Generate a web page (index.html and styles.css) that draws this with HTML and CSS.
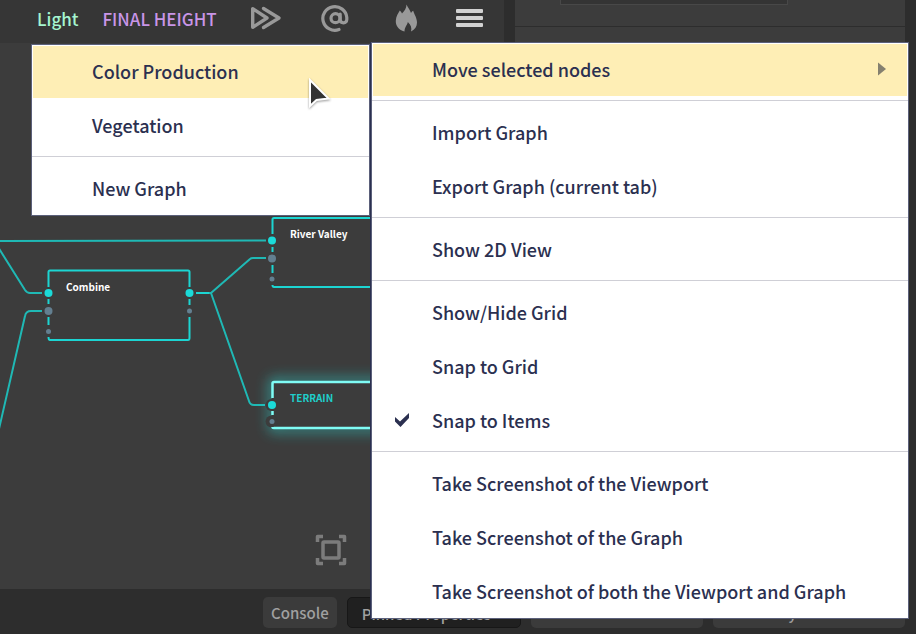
FILE: index.html
```html
<!DOCTYPE html>
<html lang="en">
<head>
<meta charset="utf-8">
<title>Graph editor</title>
<link rel="stylesheet" href="styles.css">
</head>
<body>
<div class="app">
  <div class="workspace">
    <main class="editor">
      <header class="toolbar">
        <nav class="tabs">
          <a class="tab tab-light" href="#light">Light</a>
          <a class="tab tab-height" href="#height">FINAL HEIGHT</a>
        </nav>
        <div class="tools">
          <button class="tool" type="button" aria-label="Build">
            <svg width="32" height="28" viewBox="0 0 32 28" fill="none" stroke="#999" stroke-width="3.4" stroke-linejoin="round" stroke-linecap="round"><path d="M2.7 4.700V23.300L17 14Z"/><path d="M13.500 4.500L29 14L13.500 23.500"/></svg>
          </button>
          <button class="tool" type="button" aria-label="Variables">
            <svg width="32" height="28" viewBox="-1 0 32 28" fill="none" stroke="#999" stroke-width="3.200" stroke-linecap="round"><path d="M20 25.500A12 11.800 0 1 1 27.800 13.500V15.500Q27.600 18.800 24.500 18.800Q21.200 18.800 21.200 15.500V10.200"/><circle cx="16.500" cy="14.200" r="4.500"/></svg>
          </button>
          <button class="tool" type="button" aria-label="Bake">
            <svg width="32" height="28" viewBox="-4 0 32 28" fill="#999"><path d="M16.500.500C17.500 3 20 6 21 9Q22 7 23.200 6.800C24 10 27 14 27 18.500C27 22.500 25 25.500 21 27.500C22 24 21 21 17.800 18C17.600 20.500 14.500 23 14.500 27.500C8 25.800 5.500 21 5.800 16.500C6 12 8.500 9 9.800 6.500Q11.500 8 12 9.500C14.500 7 16.500 4 16.500.500Z"/></svg>
          </button>
          <button class="tool" type="button" aria-label="Graph menu" aria-expanded="true">
            <svg width="32" height="28" viewBox="0 0 32 28" fill="#d2d2d2"><rect x="2" y="5" width="27" height="4" rx="1"/><rect x="2" y="12" width="27" height="4" rx="1"/><rect x="2" y="19" width="27" height="4" rx="1"/></svg>
          </button>
        </div>
      </header>
      <section class="canvas">
        <svg class="graph" width="504" height="547" viewBox="0 43 504 547" fill="none">
          <defs>
            <filter id="glow" x="-20%" y="-60%" width="140%" height="220%"><feGaussianBlur stdDeviation="7"/></filter>
          </defs>
          <g stroke="#1fb9b5" stroke-width="2" stroke-linejoin="round">
            <path d="M0 241L266 240.500"/>
            <path d="M-2 247L25 290Q27 293 30 293H42"/>
            <path d="M-1 429L25 316Q26 311 31 311H42"/>
            <path d="M196 293H211L250 259Q251 258 253 258H266"/>
            <path d="M211 293L249 401Q250 405 254 405H265"/>
          </g>
          <g stroke="#1cd5d2" stroke-width="2">
            <path d="M48.500 287V272Q48.500 270.500 50 270.500H188Q189.500 270.500 189.500 272V287M48.500 299V304M48.500 317V325M48.500 337Q48.500 340 50 340H188Q189.500 340 189.500 338V317M189.500 299V305M196 293H209"/>
            <path d="M430 218H274Q272.500 218 272.500 219.500V234M272.500 247V252M272.500 265V273M272.500 285Q272.500 287 274 287H430"/>
          </g>
          <path d="M430 382H273V428H430" stroke="#2be0da" stroke-width="6" opacity=".75" filter="url(#glow)"/>
          <path d="M272 383H430V427H272Z" fill="#3c3c3c"/>
          <g fill="#3c3c3c"><circle cx="271.500" cy="405" r="6"/><circle cx="271.500" cy="421.500" r="6"/></g>
          <path d="M430 382H274Q272.500 382 272.500 383.500V398M272.500 411V415M272.500 427Q272.500 428 274 428H430" stroke="#7ffcf5" stroke-width="2.500"/>
          <g fill="#1bdad8"><circle cx="48.500" cy="293" r="4"/><circle cx="189.500" cy="293" r="4"/><circle cx="272" cy="240.500" r="4"/><circle cx="272" cy="405" r="4"/></g>
          <g fill="#637f90"><circle cx="48.500" cy="311" r="4"/><circle cx="272" cy="258.500" r="4"/><circle cx="48.500" cy="331.500" r="2.500"/><circle cx="189.500" cy="311" r="2.500"/><circle cx="272" cy="279" r="2.500"/><circle cx="272" cy="421.500" r="2.500"/></g>
          <g class="node-name">
            <text x="66" y="291">Combine</text>
            <text x="290" y="238">River Valley</text>
            <text class="active" x="290" y="402">TERRAIN</text>
          </g>
        </svg>
        <button class="fit" type="button" aria-label="Fit to view">
          <svg width="32" height="32" viewBox="0 0 32 32" fill="none" stroke="#7c7c7c"><rect x="8" y="8" width="16" height="16" rx="1" stroke-width="3.500"/><path d="M2.500 8V2.500H8M24 2.500H29.500V8M29.500 24V29.500H24M8 29.500H2.500V24" stroke-width="3.500" stroke-linejoin="round"/></svg>
        </button>
      </section>
    </main>
    <aside class="properties">
      <div class="preview"></div>
    </aside>
  </div>
  <footer class="dock">
    <button class="dock-tab" type="button">Console</button>
    <button class="dock-tab selected" type="button">Pinned Properties</button>
    <button class="dock-tab" type="button">Node Statistics</button>
    <button class="dock-tab" type="button">Memory Allocations</button>
  </footer>

  <div class="menu submenu" role="menu">
    <button class="item hover" type="button" role="menuitem">Color Production</button>
    <button class="item" type="button" role="menuitem">Vegetation</button>
    <hr class="rule">
    <button class="item" type="button" role="menuitem">New Graph</button>
  </div>
  <div class="menu main-menu" role="menu">
    <button class="item hover" type="button" role="menuitem">Move selected nodes<svg class="arrow" width="8" height="14" viewBox="0 0 8 14"><path d="M0 .500L8 7L0 13.500Z" fill="#85806f"/></svg></button>
    <hr class="rule">
    <button class="item" type="button" role="menuitem">Import Graph</button>
    <button class="item" type="button" role="menuitem">Export Graph (current tab)</button>
    <hr class="rule">
    <button class="item" type="button" role="menuitem">Show 2D View</button>
    <hr class="rule">
    <button class="item" type="button" role="menuitem">Show/Hide Grid</button>
    <button class="item" type="button" role="menuitem">Snap to Grid</button>
    <button class="item checked" type="button" role="menuitem"><svg class="check" width="16" height="16" viewBox="0 0 16 16"><path d="M1 5L6 9.500L15 1V6L6.500 15L1 9.500Z" fill="#2b3050"/></svg>Snap to Items</button>
    <hr class="rule">
    <button class="item" type="button" role="menuitem">Take Screenshot of the Viewport</button>
    <button class="item" type="button" role="menuitem">Take Screenshot of the Graph</button>
    <button class="item" type="button" role="menuitem">Take Screenshot of both the Viewport and Graph</button>
  </div>
  <svg class="pointer" width="24" height="32" viewBox="0 0 24 32"><path d="M2 2V28L8.500 22L20.500 20.500Z" fill="#333" stroke="#fff" stroke-width="2"/></svg>
</div>
</body>
</html>
```
FILE: styles.css
```css
* { box-sizing: border-box; }

body {
  margin: 0;
  background: #2d2d2d;
  font-family: "Noto Sans CJK SC", "Noto Sans", sans-serif;
}

button {
  margin: 0;
  padding: 0;
  border: 0;
  background: none;
  font: inherit;
  color: inherit;
}

svg { display: block; }

.app {
  position: relative;
  display: flex;
  flex-direction: column;
  min-height: 100vh;
  overflow: hidden;
}

.workspace {
  flex: 1;
  display: grid;
  grid-template-columns: 504fr 390fr;
  gap: 11px;
  padding-right: 11px;
}

.editor {
  display: flex;
  flex-direction: column;
  min-width: 0;
  background: #3c3c3c;
}

.toolbar {
  display: flex;
  align-items: flex-start;
  height: 43px;
  padding: 4px 18px 0 37px;
  background: #363636;
}

.tabs {
  display: flex;
  gap: 24px;
  flex: 1;
}

.tab {
  font-size: 17px;
  font-weight: 500;
  line-height: 30px;
  text-decoration: none;
  white-space: nowrap;
}

.tab-light { color: #a5f5d0; }
.tab-height { color: #c995e8; }

.tools {
  display: flex;
  gap: 36px;
}

.canvas {
  position: relative;
  flex: 1;
  overflow: hidden;
}

.graph {
  position: absolute;
  left: 0;
  top: 0;
}

.node-name {
  font-size: 10px;
  font-weight: 700;
  fill: #fff;
}

.node-name .active { fill: #1fcfcb; }

.fit {
  position: absolute;
  left: 315px;
  bottom: 23px;
}

.properties {
  padding: 0 117px 0 45px;
  background: linear-gradient(#2d2d2d, #2d2d2d) 0 26px / 100% 1px no-repeat #3c3c3c;
}

.preview {
  height: 5px;
  border: 1px solid #484848;
  border-top: 0;
  background: #343434;
}

.dock {
  display: grid;
  grid-template-columns: auto 174fr 171fr 192fr;
  align-items: start;
  gap: 10px;
  height: 45px;
  padding: 8px 11px 0 263px;
  background: #2d2d2d;
}

.dock-tab {
  height: 31px;
  padding: 0 8px;
  border-radius: 5px;
  background: #3b3b3b;
  color: #a0a0a0;
  font-size: 15px;
  font-weight: 500;
  line-height: 31px;
  white-space: nowrap;
}

.dock-tab.selected {
  padding: 0 14px;
  border: 1px solid #171717;
  background: #202020;
  text-align: left;
}

.menu {
  position: absolute;
  border: 1px solid #5b607a;
  background: #fff;
}

.submenu {
  top: 44px;
  left: 31px;
  width: 339px;
}

.main-menu {
  top: 42px;
  left: 371px;
  right: 7px;
  box-shadow: -1px 0 #2b3050;
}

.item {
  display: flex;
  align-items: center;
  width: 100%;
  height: 54px;
  padding: 0 21px 2px 59px;
  border: 1px solid #fff;
  color: #2b3050;
  font-size: 18px;
  font-weight: 500;
  white-space: nowrap;
}

.item:last-child { height: 53px; }

.hover { background: #feeeb5; }

.checked { padding-left: 21px; }

.check { margin-right: 22px; }

.arrow { margin-left: auto; }

.rule {
  height: 1px;
  margin: 3px 0 5px;
  border: 0;
  background: #cfcfd6;
}

.pointer {
  position: absolute;
  left: 308px;
  top: 78px;
  filter: drop-shadow(0 1px 1px #0006);
}
```
